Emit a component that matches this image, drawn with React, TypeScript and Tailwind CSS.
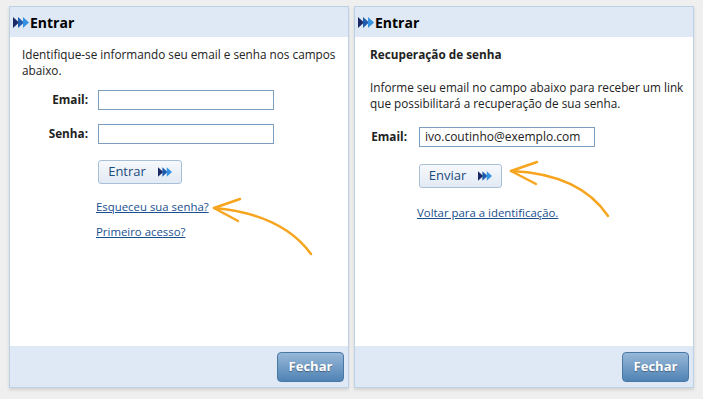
import React from "react";

function Chevrons({ className = "" }: { className?: string }) {
  return (
    <svg className={className} viewBox="0 0 16 11" width="16" height="11">
      <polygon points="0,0 6,5.5 0,11" fill="#1b2a66" />
      <polygon points="5,0 11,5.5 5,11" fill="#1f5cab" />
      <polygon points="10,0 16,5.5 10,11" fill="#3592e2" />
    </svg>
  );
}

function Panel({ children }: { children: React.ReactNode }) {
  return (
    <div className="w-[340px] h-[382px] border border-[#bcd0e6] bg-white flex flex-col shadow-[0_2px_3px_rgba(0,0,0,0.12)]">
      <div className="h-[30px] bg-[#dfe8f5] flex items-center pl-[3px] gap-[1px] pt-[1px]">
        <Chevrons />
        <span className="text-[14px] font-bold text-black">Entrar</span>
      </div>
      <div className="flex-1">{children}</div>
      <div className="h-[41px] bg-[#dfe8f5] flex items-center justify-end pr-[4px]">
        <button className="w-[67px] h-[30px] rounded-[4px] border border-[#4a78a5] bg-gradient-to-b from-[#98b8d8] to-[#4f83b4] text-white font-bold text-[13px] [text-shadow:0_1px_1px_rgba(0,0,0,0.35)]">
          Fechar
        </button>
      </div>
    </div>
  );
}

function BlueButton({ label, width }: { label: string; width: string }) {
  return (
    <button
      className={`${width} h-[24px] rounded-[3px] border border-[#a9bfd6] bg-gradient-to-b from-[#f6f9fc] to-[#e2eaf4] text-[#1d4b7c] text-[13px] flex items-center justify-center gap-[12px]`}
    >
      <span>{label}</span>
      <Chevrons className="w-[14px] h-[10px]" />
    </button>
  );
}

function Input({ value = "" }: { value?: string }) {
  return (
    <div className="w-[176px] h-[20px] border border-[#7c9dbd] bg-white text-[12px] text-[#222] pl-[5px] leading-[18px]">
      {value}
    </div>
  );
}

function Link({ children }: { children: React.ReactNode }) {
  return <a className="text-[#1a4f8f] underline text-[11.4px]">{children}</a>;
}

export default function App() {
  return (
    <div className="relative w-[703px] h-[399px] bg-[#efefef] pl-[9px] pt-[6px] flex gap-[5px] font-['Open_Sans',sans-serif] text-[11.75px] text-[#222]">
      <Panel>
        <div className="pl-[12px] pt-[9px]">
          <p className="leading-[16px]">
            Identifique-se informando seu email e senha nos campos
            <br />
            abaixo.
          </p>
          <div className="mt-[12px] grid grid-cols-[66px_176px] gap-x-[10px] gap-y-[14px] items-center">
            <span className="text-right font-bold">Email:</span>
            <Input />
            <span className="text-right font-bold">Senha:</span>
            <Input />
          </div>
          <div className="ml-[76px] mt-[16px]">
            <BlueButton label="Entrar" width="w-[84px]" />
          </div>
          <div className="ml-[74px] mt-[15px] flex flex-col gap-[9px] items-start leading-[16px]">
            <Link>Esqueceu sua senha?</Link>
            <Link>Primeiro acesso?</Link>
          </div>
        </div>
      </Panel>
      <Panel>
        <div className="pl-[15px] pt-[9px]">
          <p className="font-bold leading-[16px]">Recuperação de senha</p>
          <p className="leading-[16px] mt-[17px]">
            Informe seu email no campo abaixo para receber um link
            <br />
            que possibilitará a recuperação de sua senha.
          </p>
          <div className="mt-[16px] flex items-center">
            <span className="font-bold w-[37px] text-right">Email:</span>
            <div className="ml-[12px]">
              <Input value="ivo.coutinho@exemplo.com" />
            </div>
          </div>
          <div className="ml-[49px] mt-[17px]">
            <BlueButton label="Enviar" width="w-[83px]" />
          </div>
          <div className="ml-[47px] mt-[16px] leading-[16px]">
            <Link>Voltar para a identificação.</Link>
          </div>
        </div>
      </Panel>
      <svg className="absolute left-0 top-0 pointer-events-none" width="703" height="399">
        <g fill="none" stroke="#f7a51f" strokeWidth="2.5" strokeLinecap="round" strokeLinejoin="round">
          <path d="M214,208 Q282,214 311,254" />
          <path d="M240,199 L214,208 L238,221" />
          <path d="M511,171 Q580,174 608,216" />
          <path d="M537,162 L511,171 L536,184" />
        </g>
      </svg>
    </div>
  );
}
